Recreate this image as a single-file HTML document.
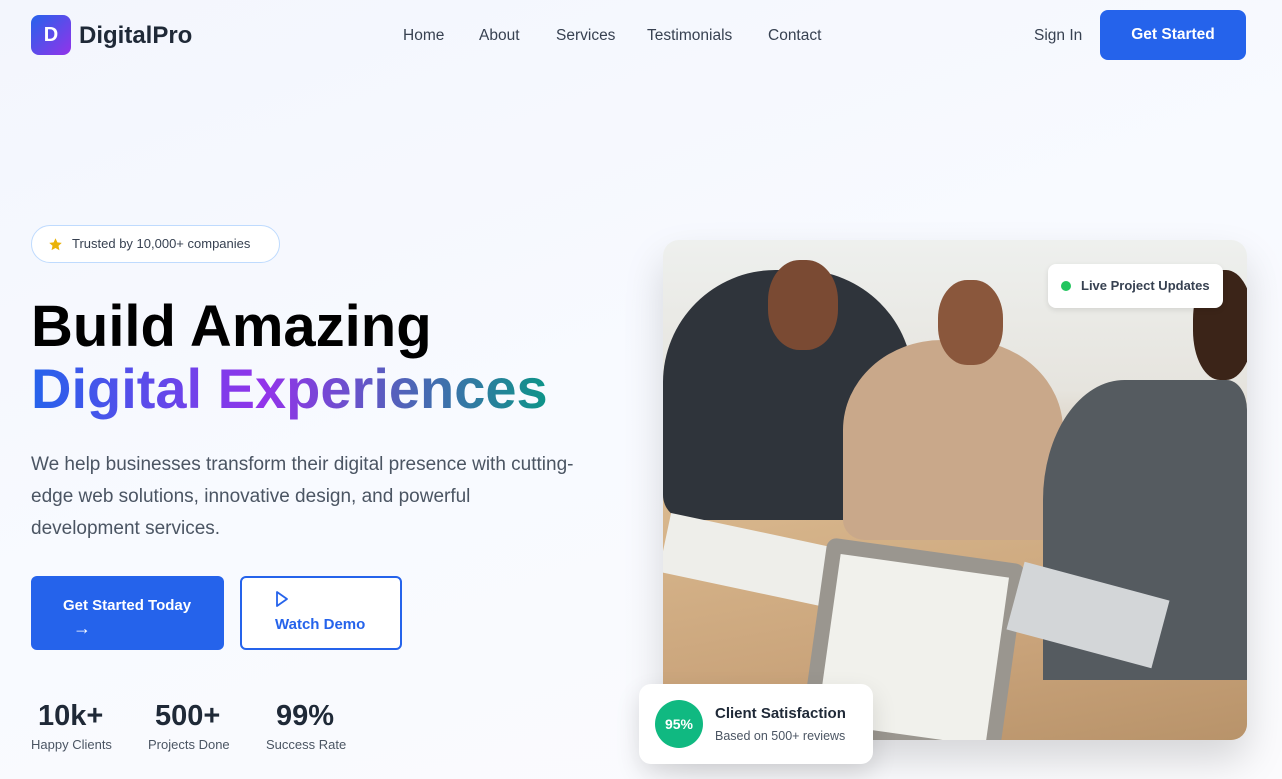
<!DOCTYPE html>
<html><head><meta charset="utf-8"><style>
*{margin:0;padding:0;box-sizing:border-box}
body{width:1282px;height:779px;overflow:hidden;font-family:"Liberation Sans",sans-serif;background:linear-gradient(160deg,#f3f6fd 0%,#f8faff 50%,#fbfbfd 100%);position:relative;color:#1f2937}
.abs{position:absolute}
.logo{left:31px;top:15px;width:40px;height:40px;border-radius:8px;background:linear-gradient(135deg,#2563eb,#9333ea);color:#fff;font-weight:bold;font-size:20px;text-align:center;line-height:40px}
.brand{left:79px;top:22px;font-size:24px;font-weight:bold;color:#1f2937}
.nav{top:27px;font-size:15.5px;color:#374151}
.btn1{left:1100px;top:10px;width:146px;height:50px;background:#2563eb;border-radius:8px;color:#fff;font-weight:bold;font-size:15.5px;text-align:center;line-height:50px}
.badge{left:31px;top:225px;width:249px;height:38px;border:1px solid #bfdbfe;background:#fff;border-radius:19px;font-size:13px;color:#374151;line-height:36px;padding-left:40px}
h1{position:absolute;left:31px;top:296px;font-size:58px;line-height:62px;font-weight:bold;color:#000}
.grad{background:linear-gradient(90deg,#2563eb 0%,#9333ea 45%,#0d9488 100%);-webkit-background-clip:text;background-clip:text;color:transparent;font-size:56px}
.p{left:31px;top:449px;white-space:nowrap;font-size:19px;line-height:32px;color:#4b5563}
.b2{left:31px;top:576px;width:193px;height:74px;background:#2563eb;border-radius:6px;color:#fff;font-weight:bold;font-size:15px;padding:19px 0 0 32px;line-height:22px}
.b3{left:240px;top:576px;width:162px;height:74px;border:2px solid #2563eb;border-radius:6px;color:#2563eb;font-weight:bold;font-size:15px;padding:12px 0 0 33px;background:#fff}
.sn{font-size:29px;font-weight:bold;color:#1f2937;top:700px}
.sl{font-size:13px;color:#4b5563;top:737px}
.photo{left:663px;top:240px;width:584px;height:500px;border-radius:16px;overflow:hidden;box-shadow:0 20px 40px rgba(0,0,0,.15);background:linear-gradient(180deg,#eef0ee 0%,#e6e4de 30%,#cdb598 55%,#d7bc96 100%)}
</style></head><body>
<div class="abs logo">D</div>
<div class="abs brand">DigitalPro</div>
<div class="abs nav" style="left:403px">Home</div>
<div class="abs nav" style="left:479px">About</div>
<div class="abs nav" style="left:556px">Services</div>
<div class="abs nav" style="left:647px">Testimonials</div>
<div class="abs nav" style="left:768px">Contact</div>
<div class="abs nav" style="left:1034px">Sign In</div>
<div class="abs btn1">Get Started</div>

<div class="abs badge"><svg class="abs" style="left:16px;top:11px" width="15" height="15" viewBox="0 0 24 24"><path d="M12 2l3 6.5 7 .8-5.2 4.8 1.5 7L12 17.5 5.7 21l1.5-7L2 9.3l7-.8z" fill="#eab308"/></svg>Trusted by 10,000+ companies</div>
<h1>Build Amazing<br><span class="grad">Digital Experiences</span></h1>
<div class="abs p">We help businesses transform their digital presence with cutting-<br>edge web solutions, innovative design, and powerful<br>development services.</div>
<div class="abs b2">Get Started Today<br><span style="font-weight:normal;font-size:18px;padding-left:10px">→</span></div>
<div class="abs b3"><svg width="14" height="18" viewBox="0 0 14 18" style="display:block;margin-bottom:8px"><path d="M2 2L12 9 2 16Z" fill="none" stroke="#2563eb" stroke-width="1.8" stroke-linejoin="round"/></svg>Watch Demo</div>

<div class="abs sn" style="left:38px">10k+</div><div class="abs sl" style="left:31px">Happy Clients</div>
<div class="abs sn" style="left:155px">500+</div><div class="abs sl" style="left:148px">Projects Done</div>
<div class="abs sn" style="left:276px">99%</div><div class="abs sl" style="left:266px">Success Rate</div>

<div class="abs photo">
 <div class="abs" style="left:0;top:260px;width:584px;height:240px;background:linear-gradient(170deg,#d9b88e,#c9a37a 60%,#b8936a)"></div>
 <div class="abs" style="left:0;top:30px;width:250px;height:250px;background:#2f343b;border-radius:45% 45% 10% 10%"></div>
 <div class="abs" style="left:105px;top:20px;width:70px;height:90px;background:#7a4a33;border-radius:45%"></div>
 <div class="abs" style="left:180px;top:100px;width:220px;height:200px;background:#c9a88a;border-radius:45% 45% 10% 10%"></div>
 <div class="abs" style="left:275px;top:40px;width:65px;height:85px;background:#8a573c;border-radius:45%"></div>
 <div class="abs" style="left:380px;top:140px;width:204px;height:300px;background:#555b60;border-radius:40% 10% 0 0"></div>
 <div class="abs" style="left:530px;top:30px;width:60px;height:110px;background:#3b2418;border-radius:45%"></div>
 <div class="abs" style="left:0;top:290px;width:170px;height:60px;background:#eeeeea;transform:rotate(12deg)"></div>
 <div class="abs" style="left:150px;top:310px;width:200px;height:200px;background:#9a968f;border-radius:10px;transform:rotate(8deg)"></div>
 <div class="abs" style="left:165px;top:325px;width:170px;height:170px;background:#f1f1ec;transform:rotate(8deg)"></div>
 <div class="abs" style="left:350px;top:340px;width:150px;height:70px;background:#d3d6d8;transform:rotate(15deg)"></div>
 <div class="abs" style="left:385px;top:24px;width:175px;height:44px;background:#fff;border-radius:8px;font-size:13px;font-weight:bold;color:#374151;line-height:44px;padding-left:33px;box-shadow:0 2px 6px rgba(0,0,0,.1)"><span class="abs" style="left:13px;top:17px;width:10px;height:10px;border-radius:50%;background:#22c55e"></span>Live Project Updates</div>
</div>
<div class="abs" style="left:639px;top:684px;width:234px;height:80px;background:#fff;border-radius:12px;box-shadow:0 10px 25px rgba(0,0,0,.12)">
 <div class="abs" style="left:16px;top:16px;width:48px;height:48px;border-radius:50%;background:#10b981;color:#fff;font-weight:bold;font-size:14px;text-align:center;line-height:48px">95%</div>
 <div class="abs" style="left:76px;top:21px;font-size:15px;font-weight:bold;color:#1f2937">Client Satisfaction</div>
 <div class="abs" style="left:76px;top:45px;font-size:12.5px;color:#4b5563">Based on 500+ reviews</div>
</div>
</body></html>
